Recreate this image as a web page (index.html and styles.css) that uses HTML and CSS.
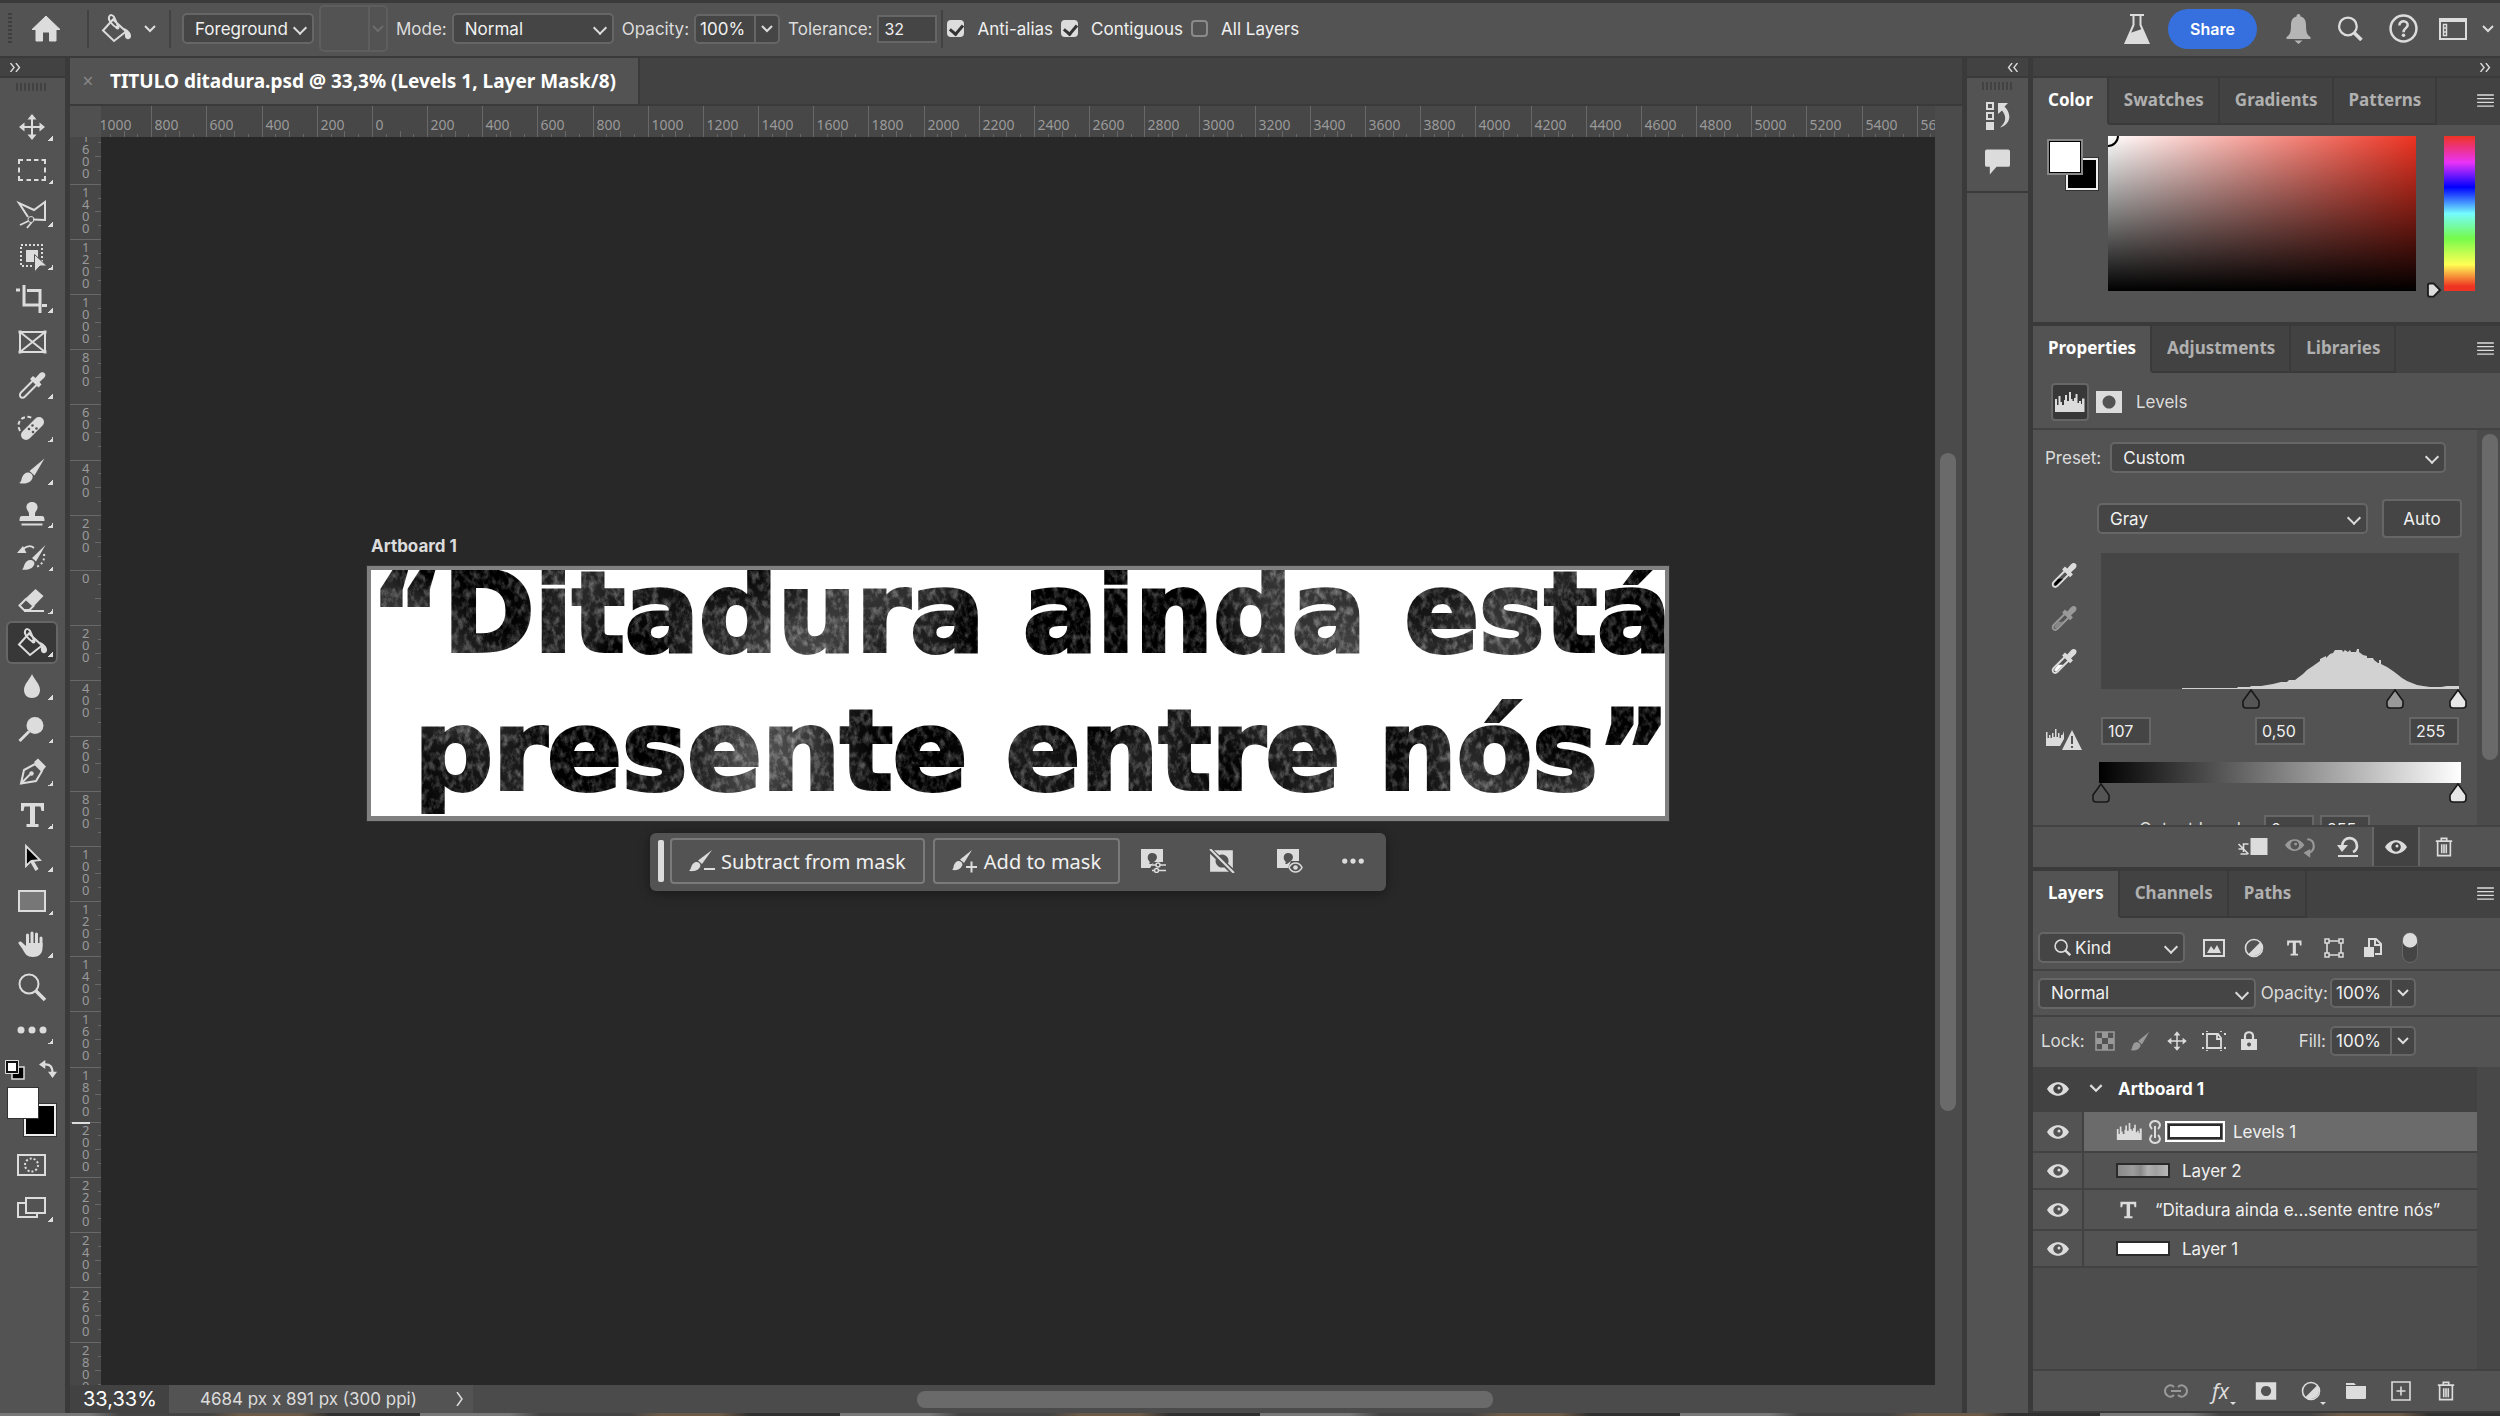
FILE: index.html
```html
<!DOCTYPE html>
<html lang="en">
<head>
  <meta charset="UTF-8" />
  <meta name="viewport" content="width=device-width, initial-scale=1.0"/>
  <title>TITULO ditadura.psd</title>
  <link rel="stylesheet" href="styles.css">
</head>
<body>

  <!-- icon sprite -->
  <svg class="sprite" aria-hidden="true">
    <symbol id="i-home" viewBox="0 0 28 26"><path fill="currentColor" d="M14 0 28 13.500h-4V25h-6.500v-9h-7v9H4V13.500H0z"/></symbol>
    <symbol id="i-move" viewBox="0 0 32 32"><path d="M16 7v18M7 16h18" stroke-width="2"/><path fill="currentColor" stroke="none" d="M16 3l4.500 5.500h-9zM16 29l4.500-5.500h-9zM3 16l5.500-4.500v9zM29 16l-5.500-4.500v9z"/></symbol>
    <symbol id="i-marquee" viewBox="0 0 32 32"><path stroke-width="2" d="M3 10V6h4M10.500 6h4.500M18 6h4.500M25.500 6H29v4M29 13.500v5M29 22v4h-3.500M22.500 26H18M15 26h-4.500M7 26H3v-4M3 18.500v-5"/></symbol>
    <symbol id="i-lasso" viewBox="0 0 32 32"><path stroke-width="2" d="M12 20 3 6l15 7L29 5v18l-12-.500"/><circle cx="15" cy="22.500" r="3"/><path stroke-width="1.800" d="M12.500 24 4 28M15.500 25.500 11 31"/></symbol>
    <symbol id="i-object" viewBox="0 0 32 32"><path stroke-width="2" stroke-dasharray="2 2" d="M5 5h21v21H5z"/><path fill="currentColor" stroke="none" d="M10 10h12v8l-4-3v7h-8z"/><path fill="currentColor" stroke="#535353" stroke-width="1" d="M18.500 14.500 31 26h-7l-5.500 6z"/></symbol>
    <symbol id="i-crop" viewBox="0 0 32 32"><path stroke-width="3" d="M8 2v20h15M0 7h4M11 7.500h13V30M26 22.500h5"/></symbol>
    <symbol id="i-frame" viewBox="0 0 32 32"><path stroke-width="2" d="M4 6h25v20H4zM4 6l25 20M29 6 4 26"/><path fill="currentColor" stroke="none" d="M2.500 4.500h3v3h-3zM27.500 4.500h3v3h-3zM2.500 24.500h3v3h-3zM27.500 24.500h3v3h-3z"/></symbol>
    <symbol id="i-dropper" viewBox="0 0 32 32"><path stroke-width="2" d="M17 11.500 5 23.500c-2 2-1 5 1 5.200 1 .2 2-.2 3-1.200l12-12"/><path fill="currentColor" stroke="none" d="M14 10l3-3 2.500 2 4-4.500c2-2 4-1.500 5-.5s1.500 3-.5 5L23.500 13l2 2.500-3 3z"/></symbol>
    <symbol id="i-heal" viewBox="0 0 32 32"><path stroke-width="2" stroke-dasharray="4 2.500" d="M4 19C-1 9 8 2 16 6"/><path stroke-width="10" stroke-linecap="round" d="M10 23 23 10"/><g fill="#535353" stroke="none"><circle cx="13" cy="17" r="1.300"/><circle cx="16.500" cy="13.500" r="1.300"/><circle cx="17" cy="20" r="1.300"/><circle cx="20.500" cy="16.500" r="1.300"/></g></symbol>
    <symbol id="i-brush" viewBox="0 0 32 32"><g fill="currentColor" stroke="none"><path d="M28.500 3.500 18.500 20.500l-5-4.500z"/><path d="M12.500 17.500c3 .5 5 3 4 5.500-1.500 5-8 6.500-13.500 5 3-1.500 2-3.500 3.500-6.500 1-2.500 3.500-4.500 6-4z"/></g></symbol>
    <symbol id="i-stamp" viewBox="0 0 32 32"><g fill="currentColor" stroke="none"><path d="M16 4c4 0 6 3 5.500 6-.4 2.500-2.500 3.500-2.500 6v2h7c2 0 2.500 1.500 2.500 5h-25c0-3.500.5-5 2.500-5h7v-2c0-2.500-2.100-3.500-2.500-6-.5-3 1.500-6 5.500-6z"/><path d="M5.500 25.500h21v2h-21z"/></g></symbol>
    <symbol id="i-histbrush" viewBox="0 0 32 32"><path stroke-width="1.800" d="M7 8c5-4 9-3 11-1"/><path fill="currentColor" stroke="none" d="M1 12 7 5l3.500 7zM29.500 4 20 20.500l-4-3.500zM15 19c3 .5 4 3 3 5-1.500 4-7 5.500-12 4.500 2-1.500 1.500-3.500 3-6 1-2 3.500-4 6-3.500z"/><path stroke-width="2" stroke-dasharray="2 2.500" d="M28 13c1 6-2 11-8 13"/></symbol>
    <symbol id="i-eraser" viewBox="0 0 32 32"><path stroke-width="2" d="M3.500 21.500 10 15l7.500 7-4 4H8zM8 27h20"/><path fill="currentColor" stroke="none" d="M10 14 19.500 5l8 7-9.500 10z"/></symbol>
    <symbol id="i-bucket" viewBox="0 0 32 32"><path stroke-width="2" d="M13 6.500 3 17.500 14 28l12-9.500zM17 15c-5-3-9-8-8-11s4-2 5 0l4 9"/><circle cx="17.500" cy="14.500" r="2" fill="currentColor" stroke="none"/><path fill="currentColor" stroke="none" d="M24 15c5 2 7.500 6 7 8.500-.5 3.500-5.500 3.500-6 0-.3-2 .5-4-1-8.500z"/></symbol>
    <symbol id="i-drop" viewBox="0 0 32 32"><path fill="currentColor" stroke="none" d="M16 4c2 5 8 10 8 16 0 5-3.500 8-8 8s-8-3-8-8c0-6 6-11 8-16z"/></symbol>
    <symbol id="i-dodge" viewBox="0 0 32 32"><circle cx="19" cy="12.500" r="8.500" fill="currentColor" stroke="none"/><path stroke-width="3" d="M13 18.500 3.500 28"/></symbol>
    <symbol id="i-pen" viewBox="0 0 32 32"><path stroke-width="2" d="M5 27.500 8 14l11-6 7 7-6 10zM5 27.500l9-9"/><circle cx="15.500" cy="17.500" r="2.200" fill="currentColor" stroke="none"/><path fill="currentColor" stroke="none" d="m18 6 4-3.500L30 10.500 26.500 15z"/></symbol>
    <symbol id="i-type" viewBox="0 0 32 32"><path fill="currentColor" stroke="none" d="M5 4h23v8h-2.500L24.500 7.500H19V25h3.500v3h-12v-3H14V7.500H8.500L7.500 12H5z"/></symbol>
    <symbol id="i-arrow" viewBox="0 0 32 32"><path fill="#000" stroke-width="1.800" d="M10 4v20l5-5 9-1z"/><path stroke-width="3.500" d="M15.500 18.500 21 28"/></symbol>
    <symbol id="i-rect" viewBox="0 0 32 32"><path fill="#777" stroke-width="2" d="M3 6h26v20H3z"/></symbol>
    <symbol id="i-hand" viewBox="0 0 32 32"><path stroke-width="3" stroke-linecap="round" d="M11.500 17V7M16 16V5M20.500 16V6M25 18v-8"/><path fill="currentColor" stroke="none" d="M10 15h16.500v5c0 6-4 9-9.500 9-6 0-8-3-10.500-8L2.500 15.500c-.5-1.500 1.500-2.500 3-1.500L10 18z"/></symbol>
    <symbol id="i-zoom" viewBox="0 0 32 32"><circle cx="13" cy="13" r="9.500" stroke-width="2"/><path stroke-width="3.500" d="m20 20 9 9"/></symbol>
    <symbol id="i-dots" viewBox="0 0 32 32"><g fill="currentColor" stroke="none"><circle cx="5" cy="16" r="3.500"/><circle cx="16" cy="16" r="3.500"/><circle cx="27" cy="16" r="3.500"/></g></symbol>
    <symbol id="i-quick" viewBox="0 0 32 32"><path stroke-width="2" d="M2 6h27v20H2z"/><circle cx="15.500" cy="16" r="6.500" stroke-width="2" stroke-dasharray="2 2"/></symbol>
    <symbol id="i-screen" viewBox="0 0 32 32"><path stroke-width="2" d="M10 6h19v15H10z"/><path stroke-width="2" d="M10 11H2v14h19v-4"/></symbol>
    <symbol id="i-swap" viewBox="0 0 20 20"><path stroke-width="2.500" d="M5 5c8-1 10 3 10 10"/><path fill="currentColor" stroke="none" d="M0 5l7-5v10zM15 20l-5-7h10z"/></symbol>
    <symbol id="i-chev" viewBox="0 0 12 8"><path stroke-width="2" d="M1 1l5 5 5-5"/></symbol>
    <symbol id="i-dbl" viewBox="0 0 12 10"><path stroke-width="1.500" d="M1 0l4 5-4 5M7 0l4 5-4 5"/></symbol>
    <symbol id="i-flask" viewBox="0 0 26 32"><path stroke-width="2" d="M6 2h14M9.500 2v10L1.500 30h23L16.500 12V2"/><path fill="currentColor" stroke="none" d="m6 20 12-4 7 15H1z"/></symbol>
    <symbol id="i-bell" viewBox="0 0 24 30"><path fill="currentColor" stroke="none" d="M12 0c1.500 0 2 1 2 2.500 4 1 5.500 4 5.500 8.500 0 7 1 10 4.500 12v2H0v-2c3.500-2 4.500-5 4.500-12 0-4.500 1.500-7.500 5.500-8.500C10 1 10.500 0 12 0zM8 26.500h8L12 30z"/></symbol>
    <symbol id="i-search" viewBox="0 0 24 24"><circle cx="10" cy="10" r="8.500" stroke-width="2.200"/><path stroke-width="3.500" d="m16 16 7 7"/></symbol>
    <symbol id="i-help" viewBox="0 0 28 28"><circle cx="14" cy="14" r="12.500" stroke-width="2.400"/><path stroke-width="2.400" d="M10 11c0-5.500 8.500-5 8 0-.3 2.600-4 3-4 6.500"/><circle cx="14" cy="20.500" r="1.700" fill="currentColor" stroke="none"/></symbol>
    <symbol id="i-work" viewBox="0 0 28 22"><path stroke-width="2" d="M1 1h26v20H1z"/><path stroke-width="2" d="M1 3h26"/><path stroke-width="1.500" d="M4.500 6.500h3v11h-3zM4 10h4M4 14h4"/></symbol>
    <symbol id="i-history" viewBox="0 0 26 30"><path stroke-width="2" d="M2 2h6v6H2zM2 12h6v6H2z"/><path fill="currentColor" stroke="none" d="M1 21h8v8H1zM13 2h10l-3.500 3.500C27 13 26 23 15 26.500c6-5 7-11 2-17L13 13z"/></symbol>
    <symbol id="i-comment" viewBox="0 0 26 26"><path fill="currentColor" stroke="none" d="M2 0h22q2 0 2 2v14q0 2-2 2H12L5 26v-8H2q-2 0-2-2V2q0-2 2-2z"/></symbol>
    <symbol id="i-menu" viewBox="0 0 18 14"><path stroke-width="1.500" d="M0 1h18M0 5h18M0 9h18M0 13h18"/></symbol>
    <symbol id="i-levels" viewBox="0 0 32 20"><path fill="currentColor" stroke="none" d="M1 20V7h2v6h1.500V4h2v6H8v3h2V8h1V3h2v6h2V0h2v7h1.500v2H20V6h1.500V2h2v9H25V9h2v3h1V6.500h2.500V20z"/></symbol>
    <symbol id="i-mask" viewBox="0 0 28 22"><path fill="currentColor" stroke="none" fill-rule="evenodd" d="M1 0h26v22H1zM14 4.500a6.500 6.500 0 1 0 .1 0z"/></symbol>
    <symbol id="i-warn" viewBox="0 0 36 22"><path fill="currentColor" stroke="none" d="M0 17V3h1.500v6H3V6h1.500v3H6V4h1.500v4H9V0h1.500v8H12V4h1.500v5H15V6h1.500L18 2v8l-4 7z"/><path fill="currentColor" stroke="none" d="m26 1 10 20H16z"/><path stroke="#535353" stroke-width="2" d="M26 7v8M26 17v2"/></symbol>
    <symbol id="i-clip" viewBox="0 0 30 22"><path fill="currentColor" stroke="none" d="M13 2h17v17H13z"/><path stroke-width="1.600" d="M11 8H6v8M1 8l10 10M1 13h5M3 18h7"/></symbol>
    <symbol id="i-eye" viewBox="0 0 22 14"><path fill="currentColor" stroke="none" fill-rule="evenodd" d="M0 7C5-2 17-2 22 7 17 16 5 16 0 7zM11 2.300a4.700 4.700 0 1 0 .1 0z"/><circle cx="12" cy="6" r="1.500" fill="currentColor" stroke="none"/></symbol>
    <symbol id="i-eyeback" viewBox="0 0 32 22"><path fill="currentColor" stroke="none" fill-rule="evenodd" d="M0 9C5 1 15 1 20 9 15 17 5 17 0 9zM10 4.500a4.500 4.500 0 1 0 .1 0z"/><circle cx="11" cy="8" r="1.500" fill="currentColor" stroke="none"/><path stroke-width="2.200" d="M23 3c8 0 9 11 2 14"/><path fill="currentColor" stroke="none" d="m19 17 7-4v9z"/></symbol>
    <symbol id="i-reset" viewBox="0 0 24 22"><path stroke-width="2.600" d="M6 10c1-11 15-10 15 0 0 3-1.500 5-4 6"/><path fill="currentColor" stroke="none" d="M1 9h11l-6 7zM2 19h20v2H2z"/></symbol>
    <symbol id="i-trash" viewBox="0 0 20 22"><path stroke-width="1.800" d="M1 4.500h18M7 4V1.500h6V4M3 5v15.500h14V5M7.500 8v10M10 8v10M12.500 8v10"/></symbol>
    <symbol id="i-image" viewBox="0 0 22 18"><path stroke-width="2" d="M1 1h20v16H1z"/><path fill="currentColor" stroke="none" d="m4 14 4-7 3 4 3-5 4 8z"/></symbol>
    <symbol id="i-adjust" viewBox="0 0 20 20"><circle cx="10" cy="10" r="8.500" stroke-width="1.600"/><path fill="currentColor" stroke="none" d="M16.500 4A9 9 0 0 1 4 16.500z"/></symbol>
    <symbol id="i-shape" viewBox="0 0 20 20"><path stroke-width="1.600" d="M3 3h14v14H3z"/><path fill="#535353" stroke-width="1.500" d="M1 1h4v4H1zM15 1h4v4h-4zM1 15h4v4H1zM15 15h4v4h-4z"/></symbol>
    <symbol id="i-smart" viewBox="0 0 20 20"><path stroke-width="2" d="M6 9V1h7l5 5v10h-6M12 1v6h6"/><path fill="currentColor" stroke="none" d="M1 9h10v10H1z"/></symbol>
    <symbol id="i-checker" viewBox="0 0 20 20"><path stroke-width="1.600" d="M1 1h18v18H1z"/><path fill="currentColor" stroke="none" d="M7 1h6v6H7zM1 7h6v6H1zM13 7h6v6h-6zM7 13h6v6H7z"/></symbol>
    <symbol id="i-lockboard" viewBox="0 0 24 20"><path stroke-width="1.800" d="M5 3h11l3 4v10H5zM15 3v5h4M0 3h2M22 3h2M0 17h2M22 17h2M5 0v1M19 0v1M5 19v1M19 19v1"/></symbol>
    <symbol id="i-lock" viewBox="0 0 18 20"><path stroke-width="2.200" d="M5 9V5c0-5 8-5 8 0v4"/><path fill="currentColor" stroke="none" fill-rule="evenodd" d="M1 8h16v11H1zM9 11.500a2 2 0 1 0 .1 0z"/></symbol>
    <symbol id="i-chain" viewBox="0 0 12 24"><path stroke-width="2" d="M3 9C-1 5 2 1 6 1s7 4 3 8M3 15c-4 4-1 8 3 8s7-4 3-8M6 6v12"/></symbol>
    <symbol id="i-link" viewBox="0 0 24 14"><path stroke-width="2" d="M10 3C6-1 1 3 1 7s5 8 9 4M14 3c4-4 9 0 9 4s-5 8-9 4M7 7h10"/></symbol>
    <symbol id="i-folder" viewBox="0 0 20 18"><path fill="currentColor" stroke="none" d="M0 1h8l2 2H0zM0 4h20v12q0 1-1 1H1q-1 0-1-1z"/></symbol>
    <symbol id="i-plus" viewBox="0 0 20 20"><path stroke-width="1.600" d="M1 1h18v18H1zM10 5.500v9M5.500 10h9"/></symbol>
    <symbol id="i-brushminus" viewBox="0 0 28 24"><path fill="currentColor" stroke="none" d="M23 1 13 15l-4-3.500zM8 13c3 .5 4 3 3 5-2 4-7 4.500-11 4 2-1.500 1.500-3 3-6 1-2 3-3.500 5-3z"/><path stroke-width="2" d="M15 20h11"/></symbol>
    <symbol id="i-brushplus" viewBox="0 0 28 24"><path fill="currentColor" stroke="none" d="M20 1 12 14l-4-3.500zM7 12c3 .5 4 3 3 5-2 4-6 4.500-10 4 2-1.500 1-3 2.500-6C3.500 13 5 11.500 7 12z"/><path stroke-width="2" d="M14 18h11M19.500 12.500v11"/></symbol>
    <symbol id="i-maskset" viewBox="0 0 26 24"><path fill="currentColor" stroke="none" fill-rule="evenodd" d="M0 0h22v13h-9l-4 6H0zM11 4c-5 0-5 6-3 8 1 1 1 2 0 3l3 0 3-3c3-2 3-8-3-8z"/><path stroke-width="1.600" d="M11 16h4M19 16h6M11 21.500h2M18 21.500h7"/><circle cx="17" cy="16" r="2" stroke-width="1.500"/><circle cx="15.500" cy="21.500" r="2" stroke-width="1.500"/></symbol>
    <symbol id="i-maskoff" viewBox="0 0 24 22"><path fill="currentColor" stroke="none" fill-rule="evenodd" d="M1 1h21v20H1zM12 5a6 6 0 1 0 .1 0z"/><path stroke="#535353" stroke-width="5" d="m0 0 23 22"/><path stroke-width="2" d="m1 0 22 22"/></symbol>
    <symbol id="i-maskeye" viewBox="0 0 26 24"><path fill="currentColor" stroke="none" fill-rule="evenodd" d="M0 0h22v12h-8l-3 7H0zM11 4c-5 0-5 6-3 8 1 1 1 2 0 3h2l4-3c3-2 3-8-3-8z"/><path fill="#535353" stroke-width="1.600" d="M12 18.500c3-6 10-6 13 0-3 6-10 6-13 0z"/><circle cx="18.500" cy="18.500" r="2.300" fill="currentColor" stroke="none"/></symbol>
    <filter id="grain" x="0" y="0" width="100%" height="100%" color-interpolation-filters="sRGB">
      <feTurbulence type="fractalNoise" baseFrequency="0.160 0.110" numOctaves="4" seed="7" result="fine"/>
      <feColorMatrix in="fine" type="matrix" values="0.700 0 0 0 -0.300  0.700 0 0 0 -0.300  0.700 0 0 0 -0.300  0 0 0 0 1" result="a"/>
      <feTurbulence type="fractalNoise" baseFrequency="0.006" numOctaves="2" seed="12"/>
      <feColorMatrix type="matrix" values="0.700 0 0 0 -0.290  0.700 0 0 0 -0.290  0.700 0 0 0 -0.290  0 0 0 0 1" result="b"/>
      <feComposite in="a" in2="b" operator="arithmetic" k2="1" k3="1"/>
      <feComposite in2="SourceAlpha" operator="in"/>
    </filter>
  </svg>

  <header class="options">
    <span class="grip-v"></span>
    <button class="bare home" aria-label="Home"><svg class="icon"><use href="#i-home"/></svg></button>
    <span class="sep"></span>
    <button class="bare bucket" aria-label="Paint bucket"><svg class="icon tool-icon"><use href="#i-bucket"/></svg><svg class="icon chev"><use href="#i-chev"/></svg></button>
    <span class="sep"></span>
    <div class="select fill-src"><select aria-label="Fill source"><option>Foreground</option></select></div>
    <button class="pattern" aria-label="Pattern" disabled><span></span><svg class="icon chev"><use href="#i-chev"/></svg></button>
    <label for="mode">Mode:</label>
    <div class="select mode"><select id="mode"><option>Normal</option></select></div>
    <label for="opacity">Opacity:</label>
    <div class="combo"><input id="opacity" type="text" value="100%"><button aria-label="Opacity slider"><svg class="icon chev"><use href="#i-chev"/></svg></button></div>
    <label for="tolerance">Tolerance:</label>
    <input class="num tolerance" id="tolerance" type="text" value="32">
    <span class="sep tight"></span>
    <label class="check"><input type="checkbox" checked>Anti-alias</label>
    <label class="check"><input type="checkbox" checked>Contiguous</label>
    <label class="check"><input type="checkbox">All Layers</label>
    <div class="app-actions">
      <button class="bare" aria-label="Labs"><svg class="icon flask"><use href="#i-flask"/></svg></button>
      <button class="share">Share</button>
      <button class="bare" aria-label="Notifications"><svg class="icon bell"><use href="#i-bell"/></svg></button>
      <button class="bare" aria-label="Search"><svg class="icon search"><use href="#i-search"/></svg></button>
      <button class="bare" aria-label="Help"><svg class="icon help"><use href="#i-help"/></svg></button>
      <button class="bare work" aria-label="Workspace"><svg class="icon"><use href="#i-work"/></svg><svg class="icon chev"><use href="#i-chev"/></svg></button>
    </div>
  </header>

  <main class="workspace">
    <aside class="toolbar">
      <div class="strip"><svg class="icon dbl"><use href="#i-dbl"/></svg></div>
      <span class="grip-h"></span>
      <div class="tools">
        <button class="tool" aria-label="Move"><svg class="icon"><use href="#i-move"/></svg></button>
        <button class="tool" aria-label="Marquee"><svg class="icon"><use href="#i-marquee"/></svg></button>
        <button class="tool" aria-label="Lasso"><svg class="icon"><use href="#i-lasso"/></svg></button>
        <button class="tool" aria-label="Object selection"><svg class="icon"><use href="#i-object"/></svg></button>
        <button class="tool" aria-label="Crop"><svg class="icon"><use href="#i-crop"/></svg></button>
        <button class="tool single" aria-label="Frame"><svg class="icon"><use href="#i-frame"/></svg></button>
        <button class="tool" aria-label="Eyedropper"><svg class="icon"><use href="#i-dropper"/></svg></button>
        <button class="tool" aria-label="Healing brush"><svg class="icon"><use href="#i-heal"/></svg></button>
        <button class="tool" aria-label="Brush"><svg class="icon"><use href="#i-brush"/></svg></button>
        <button class="tool" aria-label="Clone stamp"><svg class="icon"><use href="#i-stamp"/></svg></button>
        <button class="tool" aria-label="History brush"><svg class="icon"><use href="#i-histbrush"/></svg></button>
        <button class="tool" aria-label="Eraser"><svg class="icon"><use href="#i-eraser"/></svg></button>
        <button class="tool active" aria-label="Paint bucket"><svg class="icon"><use href="#i-bucket"/></svg></button>
        <button class="tool" aria-label="Blur"><svg class="icon"><use href="#i-drop"/></svg></button>
        <button class="tool" aria-label="Dodge"><svg class="icon"><use href="#i-dodge"/></svg></button>
        <button class="tool" aria-label="Pen"><svg class="icon"><use href="#i-pen"/></svg></button>
        <button class="tool" aria-label="Type"><svg class="icon"><use href="#i-type"/></svg></button>
        <button class="tool" aria-label="Path selection"><svg class="icon"><use href="#i-arrow"/></svg></button>
        <button class="tool" aria-label="Rectangle"><svg class="icon"><use href="#i-rect"/></svg></button>
        <button class="tool" aria-label="Hand"><svg class="icon"><use href="#i-hand"/></svg></button>
        <button class="tool single" aria-label="Zoom"><svg class="icon"><use href="#i-zoom"/></svg></button>
        <button class="tool" aria-label="More tools"><svg class="icon"><use href="#i-dots"/></svg></button>
      </div>
      <div class="mini">
        <svg class="icon mini-sw" viewBox="0 0 20 20"><path fill="#000" stroke-width="1.500" d="M7 7h12v12H7z"/><path fill="#fff" stroke="#111" stroke-width="2" d="M2 2h10v10H2z"/><path stroke-width="1" d="M.5.5h13v13H.5z"/></svg>
        <svg class="icon swap"><use href="#i-swap"/></svg>
      </div>
      <div class="swatches"><i class="fg"></i><i class="bg"></i></div>
      <button class="tool single" aria-label="Quick mask"><svg class="icon"><use href="#i-quick"/></svg></button>
      <button class="tool" aria-label="Screen mode"><svg class="icon"><use href="#i-screen"/></svg></button>
    </aside>

    <section class="document">
      <nav class="doc-tabs">
        <div class="doc-tab"><button class="bare close" aria-label="Close">×</button><span>TITULO ditadura.psd @ 33,3% (Levels 1, Layer Mask/8)</span></div>
      </nav>
      <div class="view">
        <div class="corner"></div>
        <svg class="ruler ruler-h" id="rulerH"></svg>
        <svg class="ruler ruler-v" id="rulerV"></svg>
        <div class="canvas">
          <div class="artboard-wrap">
            <p class="artboard-name">Artboard 1</p>
            <div class="artboard">
              <p class="art-text"><span class="line-top">“Ditadura ainda está</span><span class="line-end">presente entre nós”</span></p>
            </div>
          </div>
          <div class="taskbar">
            <span class="handle"></span>
            <button class="task"><svg class="icon"><use href="#i-brushminus"/></svg>Subtract from mask</button>
            <button class="task"><svg class="icon"><use href="#i-brushplus"/></svg>Add to mask</button>
            <button class="bare" aria-label="Mask properties"><svg class="icon task-ic"><use href="#i-maskset"/></svg></button>
            <button class="bare" aria-label="Disable mask"><svg class="icon task-ic"><use href="#i-maskoff"/></svg></button>
            <button class="bare" aria-label="View mask"><svg class="icon task-ic"><use href="#i-maskeye"/></svg></button>
            <button class="bare" aria-label="More options"><svg class="icon task-ic"><use href="#i-dots"/></svg></button>
          </div>
        </div>
        <div class="scroll-v"><span></span></div>
      </div>
      <footer class="status">
        <span class="zoom-level">33,33%</span>
        <span class="doc-size">4684 px x 891 px (300 ppi)<svg class="icon" viewBox="0 0 8 14"><path stroke-width="1.500" d="m1 0 5 7-5 7"/></svg></span>
        <span class="scroll-h"></span>
      </footer>
    </section>

    <aside class="dock">
      <div class="strip"><svg class="icon dbl flip"><use href="#i-dbl"/></svg></div>
      <div class="dock-body">
        <span class="grip-h"></span>
        <button class="bare" aria-label="History"><svg class="icon history"><use href="#i-history"/></svg></button>
        <button class="bare" aria-label="Comments"><svg class="icon comment"><use href="#i-comment"/></svg></button>
      </div>
    </aside>

    <aside class="panels">
      <div class="strip"><svg class="icon dbl"><use href="#i-dbl"/></svg></div>

      <section class="panel">
        <nav class="tabs">
          <button class="tab on">Color</button><button class="tab">Swatches</button><button class="tab">Gradients</button><button class="tab">Patterns</button>
          <svg class="icon menu"><use href="#i-menu"/></svg>
        </nav>
        <div class="color-body">
          <div class="swatches"><i class="fg"></i><i class="bg"></i></div>
          <div class="field"><span class="ring"></span></div>
          <svg class="icon hue-arrow" viewBox="0 0 16 16"><path fill="#ddd" stroke="#1c1c1c" stroke-width="2" d="M3 1h4l7 7-7 7H3q-2 0-2-2V3q0-2 2-2z"/></svg>
          <div class="hue"></div>
        </div>
      </section>

      <section class="panel">
        <nav class="tabs">
          <button class="tab on">Properties</button><button class="tab">Adjustments</button><button class="tab">Libraries</button>
          <svg class="icon menu"><use href="#i-menu"/></svg>
        </nav>
        <div class="prop-head">
          <button class="lv-btn" aria-label="Levels"><svg class="icon"><use href="#i-levels"/></svg></button>
          <svg class="icon mask"><use href="#i-mask"/></svg>
          <span>Levels</span>
        </div>
        <div class="prop-main">
          <div class="prop-body">
            <div class="preset"><label for="preset">Preset:</label><div class="select"><select id="preset"><option>Custom</option></select></div></div>
            <div class="channel"><div class="select"><select aria-label="Channel"><option>Gray</option></select></div><button class="auto">Auto</button></div>
            <div class="levels">
              <div class="samplers">
                <svg class="icon" viewBox="0 0 32 32"><use href="#i-dropper"/><path fill="#000" stroke="none" d="m10 20-4 4.500c-1 2 1 3.500 2.500 2l6.500-6.500z"/></svg>
                <svg class="icon dim" viewBox="0 0 32 32"><use href="#i-dropper"/><path fill="#888" stroke="none" d="m10 20-4 4.500c-1 2 1 3.500 2.500 2l6.500-6.500z"/></svg>
                <svg class="icon" viewBox="0 0 32 32"><use href="#i-dropper"/><path fill="#fff" stroke="none" d="m10 20-4 4.500c-1 2 1 3.500 2.500 2l6.500-6.500z"/></svg>
                <svg class="icon warn"><use href="#i-warn"/></svg>
              </div>
              <div class="graph">
                <svg class="histogram" viewBox="0 0 358 136"><path fill="#d2d2d2" d="M81 136V135H136L137 134H149L150 133H160L172 131L180 129L186 129L188 127H194L202 121L206 117L212 113L219 108V106L225 103V105L229 101L232 100L234 97H241L242 99L244 97L247 99L249 97L250 99H255L256 96H258V99L262 102L266 103V105H272L273 107L277 110H278V107H280V111L286 114L289 116L292 118L296 121L301 125L306 128L311 130L316 132L322 133L329 134H340L346 133H358V136z"/></svg>
                <div class="slider">
                  <input type="range" class="dark" min="0" max="255" value="107" aria-label="Shadows">
                  <input type="range" class="mid" min="0" max="255" value="210" aria-label="Midtones">
                  <input type="range" class="light" min="0" max="255" value="255" aria-label="Highlights">
                </div>
                <div class="values">
                  <input class="num" type="text" value="107" aria-label="Shadow level"><input class="num" type="text" value="0,50" aria-label="Gamma"><input class="num" type="text" value="255" aria-label="Highlight level">
                </div>
                <div class="ramp"></div>
                <div class="slider">
                  <input type="range" class="dark" min="0" max="255" value="0" aria-label="Output black">
                  <input type="range" class="light" min="0" max="255" value="255" aria-label="Output white">
                </div>
                <div class="output"><label for="outLow">Output Levels:</label><input class="num" id="outLow" type="text" value="0"><input class="num" type="text" value="255" aria-label="Output high"></div>
              </div>
            </div>
          </div>
          <div class="prop-scroll"><span></span></div>
        </div>
        <div class="prop-foot">
          <button class="bare" aria-label="Clip to layer"><svg class="icon w30"><use href="#i-clip"/></svg></button>
          <button class="bare dim" aria-label="View previous state"><svg class="icon w30"><use href="#i-eyeback"/></svg></button>
          <button class="bare" aria-label="Reset"><svg class="icon w24"><use href="#i-reset"/></svg></button>
          <button class="bare shown" aria-label="Visibility"><svg class="icon eye"><use href="#i-eye"/></svg></button>
          <button class="bare" aria-label="Delete"><svg class="icon w20"><use href="#i-trash"/></svg></button>
        </div>
      </section>

      <section class="panel layers">
        <nav class="tabs">
          <button class="tab on">Layers</button><button class="tab">Channels</button><button class="tab">Paths</button>
          <svg class="icon menu"><use href="#i-menu"/></svg>
        </nav>
        <div class="row filter">
          <div class="select kind"><svg class="icon"><use href="#i-search"/></svg><select aria-label="Filter type"><option>Kind</option></select></div>
          <div class="filters">
            <svg class="icon w22"><use href="#i-image"/></svg>
            <svg class="icon w20"><use href="#i-adjust"/></svg>
            <svg class="icon w22"><use href="#i-type"/></svg>
            <svg class="icon w20"><use href="#i-shape"/></svg>
            <svg class="icon w20"><use href="#i-smart"/></svg>
            <span class="toggle"></span>
          </div>
        </div>
        <div class="row blend">
          <div class="select"><select aria-label="Blend mode"><option>Normal</option></select></div>
          <label for="layerOpacity">Opacity:</label>
          <div class="combo"><input id="layerOpacity" type="text" value="100%"><button aria-label="Opacity slider"><svg class="icon chev"><use href="#i-chev"/></svg></button></div>
        </div>
        <div class="row locks">
          <span class="lock-label">Lock:</span>
          <div class="lock-icons">
            <svg class="icon w20 dim"><use href="#i-checker"/></svg>
            <svg class="icon w24 dim"><use href="#i-brush"/></svg>
            <svg class="icon w24"><use href="#i-move"/></svg>
            <svg class="icon w24"><use href="#i-lockboard"/></svg>
            <svg class="icon w20"><use href="#i-lock"/></svg>
          </div>
          <label for="fill">Fill:</label>
          <div class="combo"><input id="fill" type="text" value="100%"><button aria-label="Fill slider"><svg class="icon chev"><use href="#i-chev"/></svg></button></div>
        </div>
        <div class="layer-area">
          <ul class="layer-list">
            <li class="layer group"><button class="bare vis" aria-label="Toggle"><svg class="icon eye"><use href="#i-eye"/></svg></button><div class="info"><svg class="icon fold"><use href="#i-chev"/></svg><b>Artboard 1</b></div></li>
            <li class="layer tall selected"><button class="bare vis" aria-label="Toggle"><svg class="icon eye"><use href="#i-eye"/></svg></button><div class="info"><svg class="icon lv"><use href="#i-levels"/></svg><svg class="icon chain"><use href="#i-chain"/></svg><span class="thumb-ring"><i class="thumb white"></i></span><span class="mask-name">Levels 1</span></div></li>
            <li class="layer"><button class="bare vis" aria-label="Toggle"><svg class="icon eye"><use href="#i-eye"/></svg></button><div class="info"><i class="thumb noise"></i><span>Layer 2</span></div></li>
            <li class="layer tall"><button class="bare vis" aria-label="Toggle"><svg class="icon eye"><use href="#i-eye"/></svg></button><div class="info"><svg class="icon ty"><use href="#i-type"/></svg><span>“Ditadura ainda e...sente entre nós”</span></div></li>
            <li class="layer"><button class="bare vis" aria-label="Toggle"><svg class="icon eye"><use href="#i-eye"/></svg></button><div class="info"><i class="thumb white"></i><span>Layer 1</span></div></li>
          </ul>
        </div>
        <div class="layer-foot">
          <button class="bare dim" aria-label="Link layers"><svg class="icon w24"><use href="#i-link"/></svg></button>
          <button class="bare fx more" aria-label="Layer style">fx</button>
          <button class="bare" aria-label="Add mask"><svg class="icon w22"><use href="#i-mask"/></svg></button>
          <button class="bare more" aria-label="Adjustment layer"><svg class="icon w20"><use href="#i-adjust"/></svg></button>
          <button class="bare" aria-label="New group"><svg class="icon w20"><use href="#i-folder"/></svg></button>
          <button class="bare" aria-label="New layer"><svg class="icon w20"><use href="#i-plus"/></svg></button>
          <button class="bare" aria-label="Delete layer"><svg class="icon w20"><use href="#i-trash"/></svg></button>
        </div>
      </section>
    </aside>
  </main>
  <div class="desktop"></div>

  <script src="rulers.js"></script>
</body>
</html>
```

FILE: rulers.js
```js
const NS = "http://www.w3.org/2000/svg";
const STEP = 55.17; // screen px for 200 document px

function line(svg, x1, y1, x2, y2, cls) {
  const el = document.createElementNS(NS, "line");
  el.setAttribute("x1", x1);
  el.setAttribute("y1", y1);
  el.setAttribute("x2", x2);
  el.setAttribute("y2", y2);
  el.setAttribute("class", cls);
  svg.appendChild(el);
}

function text(svg, x, y, str) {
  const el = document.createElementNS(NS, "text");
  el.setAttribute("x", x);
  el.setAttribute("y", y);
  el.textContent = str;
  svg.appendChild(el);
}

function drawRulers() {
  const h = document.getElementById("rulerH");
  const v = document.getElementById("rulerV");
  const board = document.querySelector(".artboard").getBoundingClientRect();
  const hBox = h.getBoundingClientRect();
  const vBox = v.getBoundingClientRect();
  const x0 = board.left + 5 - hBox.left;
  const y0 = board.top + 4 - vBox.top;

  for (let i = -5; x0 + i * STEP < hBox.width; i++) {
    const x = Math.round(x0 + i * STEP) + 0.5;
    line(h, x, 0, x, 31, "major");
    for (let q = 1; q < 4; q++) {
      const t = Math.round(x0 + (i + q / 4) * STEP) + 0.5;
      line(h, t, q === 2 ? 25 : 28, t, 31, "minor");
    }
    text(h, x + 3, 24, Math.abs(i * 200));
  }

  for (let i = -8; y0 + i * STEP < vBox.height; i++) {
    const y = Math.round(y0 + i * STEP) + 0.5;
    line(v, 0, y, 31, y, "major");
    for (let q = 1; q < 4; q++) {
      const t = Math.round(y0 + (i + q / 4) * STEP) + 0.5;
      line(v, q === 2 ? 25 : 28, t, 31, t, "minor");
    }
    // digits run down the ruler one under another
    String(Math.abs(i * 200)).split("").forEach((d, n) => text(v, 12, y + 12 + n * 12, d));
  }

  // cursor position
  line(v, 2, 986, 20, 986, "cursor");
}

drawRulers();
```

FILE: styles.css
```css
* {
  box-sizing: border-box;
}

body {
  margin: 0;
  height: 100vh;
  display: flex;
  flex-direction: column;
  overflow: hidden;
  background: #3a3a3a;
  color: #dcdcdc;
  font-family: Inter, "Liberation Sans", sans-serif;
  font-size: 17px;
}

button, input, select {
  font: inherit;
  color: #f0f0f0;
}

p, ul {
  margin: 0;
  padding: 0;
}

.sprite {
  position: absolute;
  width: 0;
  height: 0;
}

.icon {
  display: block;
  flex: none;
  fill: none;
  stroke: currentColor;
  color: #dcdcdc;
}

.dim .icon, .icon.dim {
  color: #999;
}

.bare {
  display: flex;
  align-items: center;
  justify-content: center;
  padding: 0;
  border: 0;
  background: none;
}

.chev {
  width: 12px;
  height: 8px;
}

/* form controls */
.select {
  position: relative;
  display: flex;
  align-items: center;
  height: 31px;
  border: 2px solid #666;
  border-radius: 5px;
  background: #454545;
}

.select select {
  width: 100%;
  height: 100%;
  padding: 0 24px 0 11px;
  border: 0;
  background: none;
  appearance: none;
}

.select::after {
  content: "";
  position: absolute;
  right: 7px;
  top: 8px;
  width: 8px;
  height: 8px;
  border: solid #dcdcdc;
  border-width: 0 2px 2px 0;
  transform: rotate(45deg);
  pointer-events: none;
}

.combo {
  display: flex;
  flex: none;
  width: 86px;
  height: 30px;
  border: 2px solid #666;
  border-radius: 5px;
  background: #454545;
}

.combo input {
  width: 58px;
  padding: 0 0 0 4px;
  border: 0;
  background: none;
}

.combo button {
  display: flex;
  flex: 1;
  align-items: center;
  justify-content: center;
  padding: 0;
  border: 0;
  border-left: 2px solid #666;
  background: none;
}

.num {
  width: 50px;
  height: 28px;
  padding: 0 5px;
  border: 2px solid #666;
  background: #454545;
  font-size: 16px;
}

.check {
  display: flex;
  align-items: center;
  gap: 13px;
  color: #f0f0f0;
}

.check input {
  position: relative;
  width: 17px;
  height: 17px;
  margin: 0;
  border: 2px solid #8a8a8a;
  border-radius: 4px;
  appearance: none;
}

.check input:checked {
  border-color: #dcdcdc;
  background: #dcdcdc;
}

.check input:checked::after {
  content: "";
  position: absolute;
  left: 3px;
  top: 0;
  width: 6px;
  height: 10px;
  border: solid #333;
  border-width: 0 3px 3px 0;
  transform: rotate(40deg);
}

/* options bar */
.options {
  display: flex;
  flex: none;
  align-items: center;
  height: 58px;
  padding: 0 6px 2px 8px;
  border-top: 3px solid #3a3a3a;
  border-bottom: 2px solid #3a3a3a;
  background: #535353;
}

.options > label {
  margin: 0 5px 0 8px;
}

.options > .check {
  margin: 0 8px 0 0;
}

.grip-v {
  width: 4px;
  height: 32px;
  margin-right: 19px;
  background: repeating-linear-gradient(#3e3e3e 0 2px, #535353 2px 4px);
}

.home .icon {
  width: 30px;
  height: 26px;
}

.sep {
  width: 2px;
  height: 38px;
  margin: 0 11px 0 26px;
  background: #424242;
}

.sep.tight {
  margin: 0 4px;
}

.bucket {
  gap: 12px;
}

.bucket + .sep {
  margin-left: 13px;
}

.tool-icon {
  width: 32px;
  height: 32px;
}

.fill-src {
  width: 132px;
}

.mode {
  width: 162px;
}

.pattern {
  display: flex;
  align-items: center;
  width: 69px;
  height: 47px;
  margin-left: 5px;
  padding: 0;
  border: 2px solid #5e5e5e;
  border-radius: 5px;
  background: #535353;
}

.pattern span {
  width: 49px;
  height: 100%;
  border-right: 2px solid #5e5e5e;
}

.pattern .icon {
  margin-left: 2px;
  color: #6c6c6c;
}

.tolerance {
  width: 60px;
}

.app-actions {
  display: flex;
  align-items: center;
  margin-left: auto;
}

.flask {
  width: 26px;
  height: 32px;
}

.share {
  width: 89px;
  height: 40px;
  margin: 0 29px 0 18px;
  border: 0;
  border-radius: 20px;
  background: #3570de;
  color: #fff;
  font-size: 16px;
  font-weight: 600;
}

.bell {
  width: 25px;
  height: 30px;
  color: #b5b5b5;
}

.search {
  width: 26px;
  height: 25px;
  margin: 0 26px;
}

.help {
  width: 29px;
  height: 29px;
  margin-right: 21px;
}

.work {
  gap: 15px;
}

.work .icon:first-child {
  width: 28px;
  height: 22px;
}

/* main columns */
.workspace {
  display: flex;
  flex: 1;
  gap: 5px;
  min-height: 0;
}

.strip {
  display: flex;
  flex: none;
  align-items: center;
  justify-content: flex-end;
  height: 20px;
  padding: 0 9px;
  border-bottom: 2px solid #3a3a3a;
  background: #424242;
}

.dbl {
  width: 12px;
  height: 9px;
}

.flip {
  transform: scaleX(-1);
}

.grip-h {
  width: 32px;
  height: 8px;
  background: repeating-linear-gradient(90deg, #424242 0 2px, #535353 2px 4px);
}

/* toolbar */
.toolbar {
  display: flex;
  flex: none;
  flex-direction: column;
  align-items: center;
  width: 65px;
  padding-right: 2px;
  background: #535353;
}

.toolbar .strip {
  align-self: stretch;
  justify-content: flex-start;
  margin-right: -2px;
}

.toolbar .grip-h {
  margin: 5px 0 14px;
}

.tool {
  position: relative;
  display: flex;
  align-items: center;
  justify-content: center;
  width: 52px;
  height: 43px;
  padding: 0;
  border: 2px solid transparent;
  border-radius: 6px;
  background: none;
}

.tool .icon {
  width: 32px;
  height: 32px;
}

.tool::after {
  content: "";
  position: absolute;
  right: 3px;
  bottom: 5px;
  width: 5px;
  height: 5px;
  background: linear-gradient(135deg, transparent 50%, #dcdcdc 50%);
}

.tool.single::after {
  display: none;
}

.tool.active {
  border-color: #666;
  background: #383838;
}

.mini {
  display: flex;
  justify-content: space-between;
  align-self: stretch;
  height: 27px;
  margin-top: 9px;
  padding: 0 6px 0 5px;
}

.mini-sw {
  width: 20px;
  height: 20px;
}

.swap {
  width: 18px;
  height: 18px;
}

.swatches {
  position: relative;
  width: 49px;
  height: 49px;
}

.swatches i {
  position: absolute;
  width: 32px;
  height: 32px;
}

.swatches .fg {
  z-index: 1;
  left: 0;
  top: 0;
  border: 1px solid #333;
  background: #fff;
}

.swatches .bg {
  right: 0;
  bottom: 0;
  border: 2px solid #eee;
  outline: 1px solid #333;
  background: #000;
}

.toolbar .swatches {
  margin-bottom: 7px;
}

/* document */
.document {
  display: flex;
  flex: 1;
  flex-direction: column;
  min-width: 0;
}

.doc-tabs {
  display: flex;
  flex: none;
  height: 48px;
  border-bottom: 2px solid #3a3a3a;
  background: #424242;
}

.doc-tab {
  display: flex;
  align-items: center;
  padding: 0 22px 0 12px;
  border-right: 2px solid #3a3a3a;
  background: #535353;
  color: #fff;
  font-family: "Noto Sans", sans-serif;
  font-size: 19px;
  font-weight: 700;
}

.close {
  width: 12px;
  margin-right: 16px;
  color: #888;
  font-weight: 400;
}

.view {
  display: grid;
  flex: 1;
  grid-template-columns: 31px 1fr 27px;
  grid-template-rows: 31px 1fr;
  min-height: 0;
}

.corner {
  background: #505050;
}

.ruler {
  width: 100%;
  height: 100%;
  overflow: hidden;
  background: #474747;
  font-family: "Noto Sans", sans-serif;
  font-size: 14px;
  fill: #9a9a9a;
}

.ruler-v {
  grid-column: 1;
  grid-row: 2;
  font-size: 13px;
}

.major, .minor {
  stroke: #686868;
}

.cursor {
  stroke: #ddd;
  stroke-width: 2;
}

.canvas {
  display: flex;
  flex-direction: column;
  align-items: center;
  overflow: hidden;
  padding-top: 399px;
  background: #282828;
}

.artboard-wrap {
  width: 71%;
}

.artboard-name {
  height: 30px;
  padding-left: 4px;
  font-weight: 700;
  font-size: 17px;
  line-height: 20px;
}

.artboard {
  height: 255px;
  overflow: hidden;
  border: 4px solid #808080;
  border-bottom-width: 5px;
  outline: 1px solid #333;
  background: #fff;
}

.art-text {
  display: flow-root;
  margin-top: -26px;
  color: #000;
  font-family: "DejaVu Sans", sans-serif;
  font-size: 110px;
  font-weight: 700;
  line-height: 138px;
  text-align: right;
  white-space: nowrap;
  -webkit-text-stroke: 4px #000;
  filter: url(#grain);
}

.art-text span {
  display: block;
}

.line-top {
  padding-right: 8px;
}

/* closing quote hangs into the margin */
.line-end {
  margin-right: -5px;
}

.taskbar {
  display: flex;
  align-items: center;
  height: 58px;
  margin-top: 12px;
  padding: 0 4px 2px 8px;
  border-radius: 6px;
  background: #535353;
  box-shadow: 0 2px 12px #0006;
}

.handle {
  width: 6px;
  height: 42px;
  margin-right: 6px;
  border-radius: 2px;
  background: #dcdcdc;
}

.task {
  display: flex;
  align-items: center;
  gap: 4px;
  height: 46px;
  margin-right: 8px;
  padding: 0 17px;
  border: 2px solid #7a7a7a;
  border-radius: 4px;
  background: none;
  font-family: "Noto Sans", sans-serif;
  font-size: 20px;
}

.task .icon {
  width: 28px;
  height: 24px;
}

.task-ic {
  width: 26px;
  height: 24px;
}

.taskbar .bare {
  width: 68px;
}

.taskbar .bare:last-child {
  width: 58px;
}

.task + .bare {
  margin-left: -8px;
}

.scroll-v {
  grid-column: 3;
  grid-row: 1 / 3;
  padding: 347px 6px 0 5px;
  background: #4b4b4b;
}

.scroll-v span {
  display: block;
  height: 658px;
  border-radius: 8px;
  background: #6a6a6a;
}

.status {
  display: flex;
  flex: none;
  align-items: center;
  height: 28px;
  background: #4b4b4b;
}

.zoom-level {
  width: 99px;
  padding-left: 13px;
  background: #424242;
  color: #fff;
  font-size: 20px;
  line-height: 28px;
}

.doc-size {
  display: flex;
  align-items: center;
  justify-content: space-between;
  width: 304px;
  height: 28px;
  padding: 0 9px 0 31px;
  background: #535353;
}

.doc-size .icon {
  width: 8px;
  height: 14px;
}

.scroll-h {
  width: 576px;
  height: 17px;
  margin-left: 444px;
  border-radius: 8px;
  background: #6a6a6a;
}

/* dock */
.dock {
  flex: none;
  width: 61px;
  background: #535353;
}

.dock-body {
  display: flex;
  flex-direction: column;
  align-items: center;
  height: 115px;
  padding-top: 4px;
  border-bottom: 2px solid #3a3a3a;
}

.history {
  width: 26px;
  height: 30px;
  margin: 11px 0 18px;
}

.comment {
  width: 25px;
  height: 26px;
}

/* panels */
.panels {
  display: flex;
  flex: none;
  flex-direction: column;
  width: 467px;
}

.panel {
  flex: none;
  margin-bottom: 4px;
  background: #535353;
}

.tabs {
  display: flex;
  align-items: center;
  height: 47px;
  background: #424242;
}

.tab {
  height: 47px;
  padding: 0 14px 3px 15px;
  border: solid #3a3a3a;
  border-width: 0 2px 2px 0;
  background: none;
  color: #b0b0b0;
  font-family: "Noto Sans", sans-serif;
  font-size: 17px;
  font-weight: 700;
}

.tab.on {
  border-bottom-color: #535353;
  background: #535353;
  color: #fff;
}

.menu {
  width: 17px;
  height: 13px;
  margin: 0 6px 2px auto;
}

.color-body {
  display: flex;
  height: 197px;
  padding: 11px 25px 31px 16px;
}

.color-body .swatches {
  margin: 5px 10px 0 0;
}

.color-body .fg {
  border: 1px solid #000;
  outline: 2px solid #888;
}

.field {
  flex: 1;
  overflow: hidden;
  background: linear-gradient(transparent, #000), linear-gradient(90deg, #fff, #ee3322);
}

.ring {
  display: block;
  width: 22px;
  height: 22px;
  margin: -11px 0 0 -11px;
  border: 2px solid #000;
  border-radius: 50%;
}

.hue-arrow {
  align-self: flex-end;
  width: 15px;
  height: 16px;
  margin: 0 2px -7px 11px;
}

.hue {
  width: 31px;
  background: linear-gradient(#ee3322, #ea33f7 17%, #0000ff 33%, #75fbfd 50%, #75fb4c 66%, #ffff54 83%, #ee3322 97%);
}

/* properties */
.prop-head {
  display: flex;
  align-items: center;
  height: 57px;
  padding: 2px 18px 0;
  border-bottom: 2px solid #424242;
}

.lv-btn {
  display: flex;
  align-items: center;
  justify-content: center;
  width: 38px;
  height: 38px;
  padding: 0;
  border: 2px solid #666;
  border-radius: 4px;
  background: #383838;
}

.lv-btn .icon {
  width: 32px;
  height: 20px;
}

.mask {
  width: 30px;
  height: 22px;
  margin: 0 12px 0 5px;
}

.prop-main {
  display: flex;
  height: 395px;
  overflow: hidden;
}

.prop-body {
  flex: 1;
  padding: 12px 0 0 12px;
}

.preset {
  display: flex;
  align-items: center;
  gap: 9px;
}

.preset .select {
  width: 336px;
}

.channel {
  display: flex;
  align-items: center;
  gap: 14px;
  margin: 26px 0 15px 52px;
}

.channel .select {
  width: 271px;
}

.auto {
  width: 80px;
  height: 39px;
  border: 2px solid #666;
  border-radius: 4px;
  background: #454545;
}

.levels {
  display: flex;
}

.samplers {
  width: 56px;
  padding: 7px 0 0 4px;
}

.samplers .icon {
  width: 30px;
  height: 30px;
  margin-bottom: 13px;
}

.samplers .warn {
  width: 36px;
  height: 22px;
  margin: 53px 0 0 -3px;
}

.graph {
  width: 358px;
}

.histogram {
  display: block;
  width: 100%;
  height: 136px;
  background: #454545;
}

.slider {
  position: relative;
  height: 20px;
  margin: 0 -9px 0 -10px;
}

.slider input {
  position: absolute;
  inset: 0;
  width: 100%;
  height: 20px;
  margin: 0;
  background: none;
  appearance: none;
  pointer-events: none;
}

.slider input::-webkit-slider-thumb {
  width: 20px;
  height: 20px;
  background: url("data:image/svg+xml,%3Csvg xmlns='http://www.w3.org/2000/svg' viewBox='0 0 20 20'%3E%3Cpath d='M10 1l8 11v4q0 3-3 3H5q-3 0-3-3v-4z' fill='%23555' stroke='%23181818' stroke-width='1.600'/%3E%3C/svg%3E");
  appearance: none;
  pointer-events: auto;
}

.slider .mid::-webkit-slider-thumb {
  background: url("data:image/svg+xml,%3Csvg xmlns='http://www.w3.org/2000/svg' viewBox='0 0 20 20'%3E%3Cpath d='M10 1l8 11v4q0 3-3 3H5q-3 0-3-3v-4z' fill='%23999' stroke='%23181818' stroke-width='1.600'/%3E%3C/svg%3E");
}

.slider .light::-webkit-slider-thumb {
  background: url("data:image/svg+xml,%3Csvg xmlns='http://www.w3.org/2000/svg' viewBox='0 0 20 20'%3E%3Cpath d='M10 1l8 11v4q0 3-3 3H5q-3 0-3-3v-4z' fill='%23e6e6e6' stroke='%23181818' stroke-width='1.600'/%3E%3C/svg%3E");
}

.values {
  display: flex;
  justify-content: space-between;
  margin: 8px 0 17px;
}

.ramp {
  height: 21px;
  margin: 0 -2px;
  background: linear-gradient(90deg, #000, #fff);
}

.output {
  display: flex;
  align-items: center;
  gap: 6px;
  margin: 12px 0 0 38px;
}

.output label {
  width: 119px;
}

.prop-scroll {
  width: 23px;
  padding: 4px 2px 0 5px;
  background: #4b4b4b;
}

.prop-scroll span {
  display: block;
  height: 326px;
  border-radius: 8px;
  background: #6a6a6a;
}

.prop-foot {
  display: flex;
  align-items: center;
  justify-content: flex-end;
  height: 42px;
  padding: 0 32px 1px 0;
  border-top: 2px solid #424242;
}

.prop-foot .bare {
  width: 48px;
  height: 39px;
}

.prop-foot .shown {
  border: solid #666;
  border-width: 0 2px;
  background: #424242;
}

.w20 { width: 20px; height: 20px; }
.w22 { width: 22px; height: 20px; }
.w24 { width: 24px; height: 24px; }
.w30 { width: 31px; height: 22px; }

.eye {
  width: 22px;
  height: 14px;
}

/* layers */
.layers {
  display: flex;
  flex: 1;
  flex-direction: column;
  margin-bottom: 2px;
  min-height: 0;
}

.tabs, .row, .layer-foot {
  flex: none;
}

.row {
  display: flex;
  align-items: center;
  height: 46px;
  padding: 0 84px 0 5px;
  border-bottom: 2px solid #424242;
}

.filter {
  height: 53px;
  padding: 8px 0 0 5px;
}

.kind {
  width: 147px;
}

.kind .icon {
  width: 17px;
  height: 17px;
  margin-left: 14px;
}

.kind select {
  padding-left: 4px;
}

.filters {
  display: flex;
  flex: 1;
  align-items: center;
  gap: 19px;
  padding-left: 18px;
}

.toggle {
  width: 16px;
  height: 31px;
  border: 1px solid #666;
  border-radius: 8px;
  background: radial-gradient(circle at 7px 7px, #dcdcdc 7px, #454545 8px);
}

.blend .select {
  flex: 1;
}

.blend label {
  margin: 0 2px 0 5px;
}

.locks {
  height: 50px;
  padding-bottom: 3px;
  border-bottom: 0;
}

.lock-label {
  margin: 0 10px 0 3px;
}

.lock-icons {
  display: flex;
  align-items: center;
  gap: 13px;
}

.locks label {
  margin: 0 4px 0 auto;
}

.layer-area {
  flex: 1;
  padding-right: 23px;
  background: linear-gradient(90deg, #4d4d4d calc(100% - 23px), #484848 0);
}

.layer-list {
  list-style: none;
}

.layer {
  display: flex;
  height: 37px;
  border-bottom: 2px solid #424242;
  background: #535353;
}

.layer.tall {
  height: 41px;
}

.layer.group {
  height: 45px;
  background: #424242;
}

.vis {
  width: 51px;
  border-right: 2px solid #424242;
}

.info {
  display: flex;
  flex: 1;
  align-items: center;
  padding-left: 32px;
  color: #f0f0f0;
}

.group .info {
  gap: 15px;
  padding-left: 5px;
  color: #fff;
}

.selected .info {
  background: #6b6b6b;
}

.fold {
  width: 14px;
  height: 9px;
}

.lv {
  width: 27px;
  height: 19px;
}

.chain {
  width: 12px;
  height: 24px;
  margin: 0 4px 0 6px;
}

.thumb {
  width: 54px;
  height: 15px;
  border: 2px solid #2a2a2a;
}

.white {
  background: #fff;
}

.noise {
  background: linear-gradient(90deg, #8a8a8a, #9c9c9c 30%, #888 45%, #b0b0b0 60%, #a0a0a0 75%, #b8b8b8);
}

.thumb + span {
  margin-left: 12px;
}

.thumb-ring {
  display: flex;
  padding: 1px;
  border: 2px solid #fff;
}

.mask-name {
  margin-left: 8px;
}

.ty {
  width: 24px;
  height: 22px;
  margin-right: 15px;
}

.layer-foot {
  display: flex;
  align-items: center;
  justify-content: flex-end;
  height: 42px;
  padding-right: 32px;
  border-top: 2px solid #424242;
}

.layer-foot .bare {
  position: relative;
  width: 45px;
  height: 38px;
}

.layer-foot .fx {
  color: #dcdcdc;
  font-family: "Noto Sans", sans-serif;
  font-size: 21px;
  font-style: italic;
}

.more::after {
  content: "";
  position: absolute;
  right: 7px;
  bottom: 5px;
  border: 3px solid transparent;
  border-top-color: #dcdcdc;
  border-bottom: 0;
}

/* sliver of the desktop behind the window */
.desktop {
  flex: none;
  height: 3px;
  background: repeating-linear-gradient(90deg, #777 0 90px, #444 120px 210px, #6b5a48 240px 300px, #303030 330px 420px);
}
```
